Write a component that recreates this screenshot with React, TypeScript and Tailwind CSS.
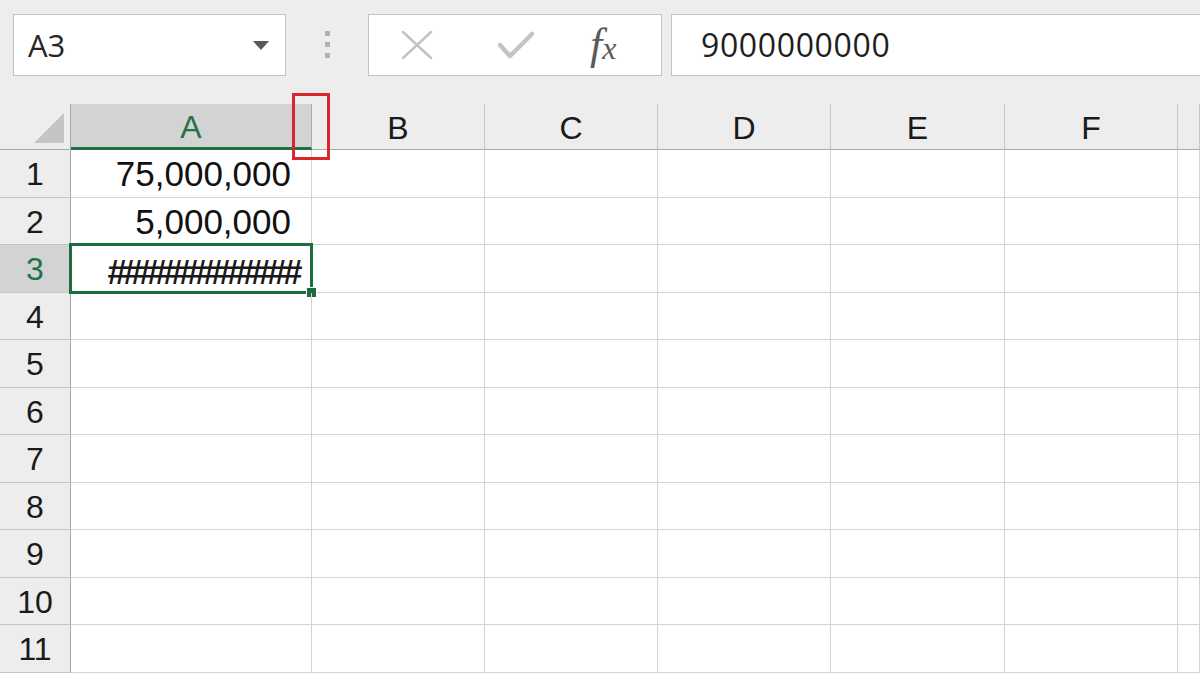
import React from 'react'

const cols = ['B', 'C', 'D', 'E', 'F', '']
const rows = [1, 2, 3, 4, 5, 6, 7, 8, 9, 10, 11]

const cellFont = { fontFamily: '"Liberation Sans", Arial, sans-serif' }
const uiFont = { fontFamily: '"Open Sans", "Noto Sans", sans-serif' }

function cellText(row: number) {
  if (row === 1) return '75,000,000'
  if (row === 2) return '5,000,000'
  return ''
}

export default function App() {
  return (
    <div className="relative w-[1200px] h-[675px] overflow-hidden bg-white" style={cellFont}>
      {/* toolbar */}
      <div className="flex h-[104px] items-start bg-[#ededed] pl-[13px] pt-[14px]">
        <div className="flex h-[62px] w-[273px] items-center justify-between border border-[#c3c3c3] bg-white pl-[14px] pr-[16px]">
          <span className="text-[31px] text-[#262626]" style={uiFont}>
            A3
          </span>
          <svg width="16" height="9" viewBox="0 0 16 9">
            <path d="M0 0 L16 0 L8 9 Z" fill="#595959" />
          </svg>
        </div>
        <div className="flex h-[62px] w-[82px] flex-col items-center justify-center gap-[6px] pl-[1px] pb-[2px]">
          <span className="block h-[5px] w-[5px] bg-[#b1b1b1]" />
          <span className="block h-[5px] w-[5px] bg-[#b1b1b1]" />
          <span className="block h-[5px] w-[5px] bg-[#b1b1b1]" />
        </div>
        <div className="flex h-[62px] w-[294px] items-center border border-[#c3c3c3] bg-white">
          <svg className="ml-[32px]" width="32" height="30" viewBox="0 0 32 30">
            <path d="M2 2 L30 28 M30 2 L2 28" stroke="#c2c2c2" strokeWidth="2.4" strokeLinecap="round" fill="none" />
          </svg>
          <svg className="ml-[65px]" width="36" height="30" viewBox="0 0 36 30">
            <path d="M2 15 L12 26 L34 4" stroke="#c4c4c4" strokeWidth="4.5" strokeLinecap="round" strokeLinejoin="round" fill="none" />
          </svg>
          <span
            className="ml-[56px] italic text-[#5a5a5a] leading-none"
            style={{ fontFamily: '"Liberation Serif", "Times New Roman", serif' }}
          >
            <span className="text-[44px]">f</span>
            <span className="text-[32px]">x</span>
          </span>
        </div>
        <div className="ml-[9px] flex h-[62px] flex-1 items-center border-y border-l border-[#c3c3c3] bg-white pl-[29px]">
          <span className="text-[32px] tracking-[0.02em] text-[#1f1f1f]" style={uiFont}>
            9000000000
          </span>
        </div>
      </div>

      {/* sheet */}
      <div className="grid grid-cols-[71px_241px_173px_173px_173px_174px_173px_1fr] grid-rows-[46px_repeat(11,47.5px)]">
        {/* corner */}
        <div className="flex items-end justify-end border-r border-b border-[#a9a9a9] bg-[#ededed] pr-[6px] pb-[6px]">
          <svg width="30" height="30" viewBox="0 0 30 30">
            <path d="M30 0 L30 30 L0 30 Z" fill="#c4c4c4" />
          </svg>
        </div>
        <div className="flex items-center justify-center border-r border-b-[3px] border-r-[#a9a9a9] border-b-[#1e7145] bg-[#d3d3d3] pt-[3px] text-[32px] text-[#217346]">
          A
        </div>
        {cols.map((c, i) => (
          <div
            key={i}
            className="flex items-center justify-center border-r border-b border-r-[#c6c6c6] border-b-[#a9a9a9] bg-[#ededed] pt-[2px] text-[32px] text-[#1a1a1a]"
          >
            {c}
          </div>
        ))}

        {rows.map((r) => (
          <React.Fragment key={r}>
            <div
              className={
                r === 3
                  ? 'flex items-center justify-center border-r border-b border-r-[#a9a9a9] border-b-[#c6c6c6] bg-[#d3d3d3] pt-[2px] text-[32px] text-[#217346]'
                  : 'flex items-center justify-center border-r border-b border-r-[#a9a9a9] border-b-[#c6c6c6] bg-[#ededed] pt-[2px] text-[32px] text-[#1a1a1a]'
              }
            >
              {r}
            </div>
            <div className="relative flex items-center justify-end border-r border-b border-[#d4d4d4] pr-[20px] pt-[2px] text-[35px] text-[#111]">
              {cellText(r)}
              {r === 3 && (
                <>
                  <span className="absolute right-[12px] top-[1px] text-[35px] font-bold tracking-[-0.1em] text-[#1a1a1a]">
                    ############
                  </span>
                  <div className="absolute -left-[2px] -top-[2px] -right-[2px] -bottom-[2px] border-[3px] border-[#1e6b3f]" />
                  <div className="absolute -right-[6px] -bottom-[6px] h-[11px] w-[11px] border border-white bg-[#1e6b3f]" />
                </>
              )}
            </div>
            {cols.map((c, i) => (
              <div key={i} className="border-r border-b border-[#d4d4d4]" />
            ))}
          </React.Fragment>
        ))}
      </div>

      {/* annotation */}
      <div className="absolute left-[292px] top-[93px] h-[67px] w-[38px] border-[3px] border-[#d8262b]" />
    </div>
  )
}
